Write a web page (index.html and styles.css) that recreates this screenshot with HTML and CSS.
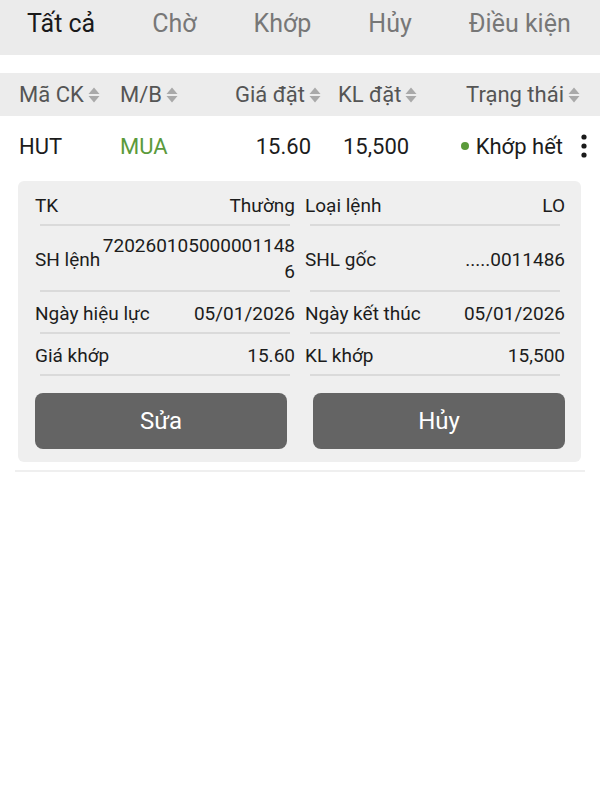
FILE: index.html
```html
<!DOCTYPE html>
<html lang="vi">
<head>
    <meta charset="UTF-8">
    <meta name="viewport" content="width=device-width, initial-scale=1.0">
    <title>Sổ lệnh</title>
    <link rel="stylesheet" href="styles.css">
</head>
<body>

    <!-- Order status tabs -->
    <div class="tabs">
        <span class="tab active">Tất cả</span>
        <span class="tab">Chờ</span>
        <span class="tab">Khớp</span>
        <span class="tab">Hủy</span>
        <span class="tab">Điều kiện</span>
    </div>

    <!-- Table header -->
    <div class="table-head">
        <div class="th">Mã CK <svg class="sort" viewBox="0 0 12 18"><path d="M0.5 8 L6 1.5 L11.5 8 Z"/><path d="M0.5 10 L6 16.5 L11.5 10 Z"/></svg></div>
        <div class="th">M/B <svg class="sort" viewBox="0 0 12 18"><path d="M0.5 8 L6 1.5 L11.5 8 Z"/><path d="M0.5 10 L6 16.5 L11.5 10 Z"/></svg></div>
        <div class="th th-right">Giá đặt <svg class="sort" viewBox="0 0 12 18"><path d="M0.5 8 L6 1.5 L11.5 8 Z"/><path d="M0.5 10 L6 16.5 L11.5 10 Z"/></svg></div>
        <div class="th th-qty">KL đặt <svg class="sort" viewBox="0 0 12 18"><path d="M0.5 8 L6 1.5 L11.5 8 Z"/><path d="M0.5 10 L6 16.5 L11.5 10 Z"/></svg></div>
        <div class="th th-right">Trạng thái <svg class="sort" viewBox="0 0 12 18"><path d="M0.5 8 L6 1.5 L11.5 8 Z"/><path d="M0.5 10 L6 16.5 L11.5 10 Z"/></svg></div>
    </div>

    <div class="order">
        <div class="order-row">
            <div class="td">HUT</div>
            <div class="td buy">MUA</div>
            <div class="td td-price">15.60</div>
            <div class="td td-qty">15,500</div>
            <div class="td td-status">
                <span class="dot"></span>Khớp hết
                <svg class="kebab" viewBox="0 0 6 24"><circle cx="3" cy="3" r="2.6"/><circle cx="3" cy="12" r="2.6"/><circle cx="3" cy="21" r="2.6"/></svg>
            </div>
        </div>

        <!-- Expanded order details -->
        <div class="detail-card">
            <div class="fields">
                <div class="field"><span class="label">TK</span><span class="value">Thường</span></div>
                <div class="field"><span class="label">Loại lệnh</span><span class="value">LO</span></div>
                <div class="field"><span class="label">SH lệnh</span><span class="value value-long">7202601050000011486</span></div>
                <div class="field"><span class="label">SHL gốc</span><span class="value">.....0011486</span></div>
                <div class="field"><span class="label">Ngày hiệu lực</span><span class="value">05/01/2026</span></div>
                <div class="field"><span class="label">Ngày kết thúc</span><span class="value">05/01/2026</span></div>
                <div class="field"><span class="label">Giá khớp</span><span class="value">15.60</span></div>
                <div class="field"><span class="label">KL khớp</span><span class="value">15,500</span></div>
            </div>
            <div class="actions">
                <button class="btn">Sửa</button>
                <button class="btn">Hủy</button>
            </div>
        </div>
    </div>

</body>
</html>
```

FILE: styles.css
```css
body {
    font-family: Roboto, "Noto Sans", Arial, sans-serif;
    background-color: #fff;
    color: #1c1c1c;
    margin: 0;
}
.tabs {
    display: flex;
    height: 55px;
    box-sizing: border-box;
    padding-bottom: 8px;
    align-items: center;
    background-color: #ebebeb;
}
.tab {
    padding: 0 30px 0 27px;
    font-size: 25px;
    color: #777;
    white-space: nowrap;
}
.tab.active {
    color: #1a1a1a;
}
.table-head, .order-row {
    display: grid;
    grid-template-columns: 101px 80px 121px 118px 1fr;
    align-items: center;
    padding: 0 20px 0 19px;
}
.table-head {
    margin-top: 18px;
    height: 43px;
    background-color: #ececec;
    font-size: 22px;
    color: #555;
}
.th {
    display: flex;
    align-items: center;
    white-space: nowrap;
}
.th-right {
    justify-content: flex-end;
}
.th-qty {
    padding-left: 17px;
}
.sort {
    width: 12px;
    height: 18px;
    margin-left: 4px;
    fill: #a9a9a9;
}
.order {
    margin: 0 15px;
    padding-bottom: 8px;
    border-bottom: 2px solid #efefef;
}
.order-row {
    height: 60px;
    margin: 0 -15px;
    padding-right: 13px;
    font-size: 22px;
}
.buy {
    color: #5b9a3c;
}
.td-price {
    text-align: right;
    padding-right: 10px;
}
.td-qty {
    padding-left: 22px;
}
.td-status {
    display: flex;
    align-items: center;
    justify-content: flex-end;
    white-space: nowrap;
}
.dot {
    width: 8px;
    height: 8px;
    border-radius: 50%;
    background-color: #5a9a3a;
    margin-right: 7px;
}
.kebab {
    width: 6px;
    height: 24px;
    margin-left: 18px;
    fill: #1a1a1a;
}
.detail-card {
    margin: 5px 4px 0 3px;
    padding: 3px 16px 13px 17px;
    background-color: #efefef;
    border-radius: 6px;
    font-size: 19px;
}
.fields {
    display: grid;
    grid-template-columns: 1fr 1fr;
    column-gap: 10px;
}
.field {
    position: relative;
    display: flex;
    align-items: center;
    justify-content: space-between;
    min-height: 42px;
    padding: 7px 0;
    box-sizing: border-box;
}
.field::after {
    content: "";
    position: absolute;
    left: 5px;
    right: 5px;
    bottom: 0;
    height: 2px;
    background-color: #dadada;
}
.label {
    flex-shrink: 0;
    white-space: nowrap;
}
.value {
    text-align: right;
    white-space: nowrap;
}
.value-long {
    white-space: normal;
    word-break: break-all;
    line-height: 26px;
    margin-left: 2px;
}
.actions {
    display: flex;
    gap: 26px;
    margin-top: 17px;
}
.btn {
    flex: 1;
    height: 56px;
    border: none;
    border-radius: 8px;
    background-color: #646464;
    color: #fff;
    font-family: inherit;
    font-size: 24px;
    cursor: pointer;
}
```
